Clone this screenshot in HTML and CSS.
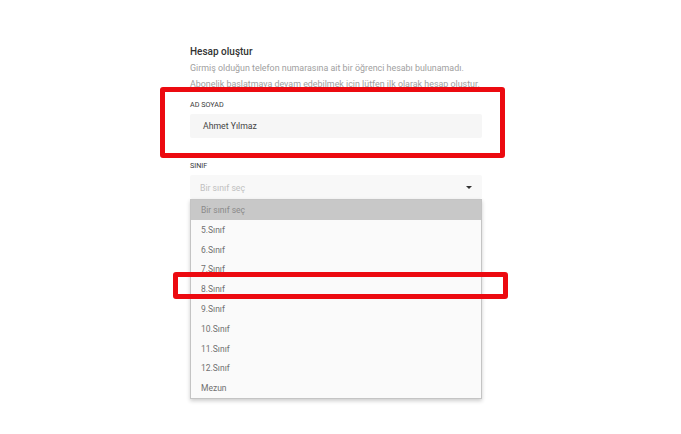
FILE: index.html
```html
<!DOCTYPE html>
<html lang="tr">
<head>
<meta charset="utf-8">
<link rel="stylesheet" href="styles.css">
</head>
<body>
<div class="form">
  <h1 class="title">Hesap oluştur</h1>
  <p class="desc">Girmiş olduğun telefon numarasına ait bir öğrenci hesabı bulunamadı.<br>Abonelik başlatmaya devam edebilmek için lütfen ilk olarak hesap oluştur.</p>
  <div class="label label-first">AD SOYAD</div>
  <div class="input">Ahmet Yılmaz</div>
  <div class="label label-second">SINIF</div>
  <div class="select-wrap">
    <div class="select">
      <span class="placeholder">Bir sınıf seç</span>
      <svg class="caret" width="6" height="3" viewBox="0 0 6 3"><path d="M0 0h6L3 3z" fill="#333"/></svg>
    </div>
    <ul class="menu">
      <li class="opt opt-active">Bir sınıf seç</li>
      <li class="opt">5.Sınıf</li>
      <li class="opt">6.Sınıf</li>
      <li class="opt">7.Sınıf</li>
      <li class="opt">8.Sınıf</li>
      <li class="opt">9.Sınıf</li>
      <li class="opt">10.Sınıf</li>
      <li class="opt">11.Sınıf</li>
      <li class="opt">12.Sınıf</li>
      <li class="opt">Mezun</li>
    </ul>
  </div>
</div>
<div class="mark mark-name"></div>
<div class="mark mark-grade"></div>
</body>
</html>
```
FILE: styles.css
```css
html, body {
  margin: 0;
  padding: 0;
  background: #ffffff;
  width: 681px;
  height: 434px;
  overflow: hidden;
  font-family: Roboto, "DejaVu Sans", sans-serif;
}
.form {
  margin-left: 190px;
  width: 292px;
  padding-top: 45px;
}
.title {
  margin: 0;
  font-size: 10px;
  line-height: 14px;
  font-weight: 500;
  color: #333333;
}
.desc {
  margin: 1px 0 0;
  font-size: 8.9px;
  line-height: 16px;
  color: #a0a0a0;
  white-space: nowrap;
}
.label {
  font-size: 7.2px;
  line-height: 10px;
  color: #3a3a3a;
  font-weight: 400;
}
.label-first { margin-top: 8px; }
.label-second { margin-top: 23px; }
.input {
  margin-top: 4px;
  height: 24px;
  background: #f6f6f6;
  border-radius: 2px;
  padding-left: 13px;
  font-size: 8.7px;
  line-height: 25px;
  color: #444444;
}
.select-wrap {
  position: relative;
  margin-top: 4px;
}
.select {
  height: 24px;
  background: #f8f8f8;
  border-radius: 2px;
  display: flex;
  align-items: center;
  justify-content: space-between;
  padding: 0 10px 0 10px;
  font-size: 8.7px;
}
.placeholder { color: #c0c0c0; padding-top: 1px; }
.caret { display: block; }
.menu {
  position: absolute;
  left: 0;
  top: 24px;
  width: 290px;
  margin: 0;
  padding: 0;
  list-style: none;
  background: #fafafa;
  border: 1px solid #c4c4c4;
  box-shadow: 0 2px 4px rgba(0,0,0,0.2);
}
.opt {
  height: 19.8px;
  line-height: 21px;
  padding-left: 10px;
  font-size: 8.5px;
  color: #707070;
  overflow: hidden;
}
.opt-active {
  background: #c8c8c8;
  color: #8a8a8a;
}
.mark {
  position: absolute;
  box-sizing: border-box;
  border: 5px solid #ec0a10;
  border-radius: 3px;
}
.mark-name {
  left: 160px;
  top: 87px;
  width: 345px;
  height: 71px;
}
.mark-grade {
  left: 173px;
  top: 272px;
  width: 335px;
  height: 27px;
}
```
